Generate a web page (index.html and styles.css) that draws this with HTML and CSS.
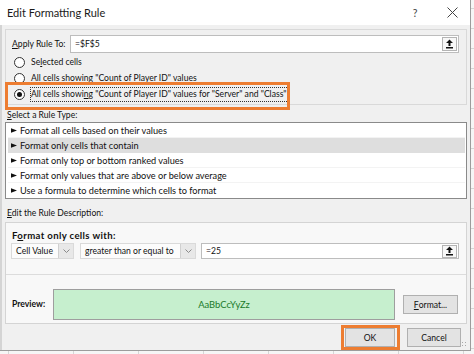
FILE: index.html
```html
<!DOCTYPE html>
<html>
<head>
<meta charset="utf-8">
<link rel="stylesheet" href="styles.css">
</head>
<body>
<div class="dialog">
  <div class="titlebar">
    <span class="title">Edit Formatting Rule</span>
    <span class="help">?</span>
    <span class="close"><svg width="11" height="11" viewBox="0 0 11 11"><path d="M0.5 0.5 L10.5 10.5 M10.5 0.5 L0.5 10.5" stroke="#444" stroke-width="1" fill="none"/></svg></span>
  </div>
  <div class="main">
    <div class="group apply">
      <div class="apply-row">
        <span class="lbl"><u>A</u>pply Rule To:</span>
        <div class="refbox">
          <span class="reftext">=$F$5</span>
          <span class="collapse"><svg width="9" height="10" viewBox="0 0 9 10"><path d="M4.5 0.5 L8 4 L5.5 4 L5.5 7 L3.5 7 L3.5 4 L1 4 Z" fill="#111"/><rect x="1" y="8" width="7" height="1.5" fill="#111"/></svg></span>
        </div>
      </div>
      <div class="radio-row"><span class="radio"></span><span class="rtext">Se<u>l</u>ected cells</span></div>
      <div class="radio-row"><span class="radio"></span><span class="rtext">All cells showing &quot;Count of Player ID&quot; values</span></div>
      <div class="radio-row"><span class="radio checked"></span><span class="rtext focus">All cells showi<u>n</u>g &quot;Count of Player ID&quot; values for &quot;Server&quot; and &quot;Class&quot;</span></div>
    </div>

    <div class="section-label"><u>S</u>elect a Rule Type:</div>
    <div class="listbox">
      <div class="item"><svg class="arrow" width="6" height="5" viewBox="0 0 6 5"><path d="M0 0.3 L6 2.5 L0 4.7 Z" fill="#111"/></svg>Format all cells based on their values</div>
      <div class="item sel"><svg class="arrow" width="6" height="5" viewBox="0 0 6 5"><path d="M0 0.3 L6 2.5 L0 4.7 Z" fill="#111"/></svg>Format only cells that contain</div>
      <div class="item"><svg class="arrow" width="6" height="5" viewBox="0 0 6 5"><path d="M0 0.3 L6 2.5 L0 4.7 Z" fill="#111"/></svg>Format only top or bottom ranked values</div>
      <div class="item"><svg class="arrow" width="6" height="5" viewBox="0 0 6 5"><path d="M0 0.3 L6 2.5 L0 4.7 Z" fill="#111"/></svg>Format only values that are above or below average</div>
      <div class="item last"><svg class="arrow" width="6" height="5" viewBox="0 0 6 5"><path d="M0 0.3 L6 2.5 L0 4.7 Z" fill="#111"/></svg>Use a formula to determine which cells to format</div>
    </div>

    <div class="section-label desc-label"><u>E</u>dit the Rule Description:</div>
    <div class="group desc">
      <div class="desc-top">
        <div class="bold-label fmt-label">F<u>o</u>rmat only cells with:</div>
        <div class="criteria">
          <div class="combo c1"><span class="val">Cell Value</span><span class="drop"><svg width="7" height="4" viewBox="0 0 7 4"><path d="M0.5 0.5 L3.5 3.5 L6.5 0.5" stroke="#8a8a8a" fill="none"/></svg></span></div>
          <div class="combo c2"><span class="val">greater than or equal to</span><span class="drop"><svg width="7" height="4" viewBox="0 0 7 4"><path d="M0.5 0.5 L3.5 3.5 L6.5 0.5" stroke="#8a8a8a" fill="none"/></svg></span></div>
          <div class="refbox crit">
            <span class="reftext">=25</span>
            <span class="collapse"><svg width="9" height="10" viewBox="0 0 9 10"><path d="M4.5 0.5 L8 4 L5.5 4 L5.5 7 L3.5 7 L3.5 4 L1 4 Z" fill="#111"/><rect x="1" y="8" width="7" height="1.5" fill="#111"/></svg></span>
          </div>
        </div>
      </div>
      <div class="desc-bottom">
        <div class="bold-label preview-label">Preview:</div>
        <div class="preview">AaBbCcYyZz</div>
        <div class="btn format"><u>F</u>ormat...</div>
      </div>
    </div>

    <div class="buttons">
      <div class="btn ok">OK</div>
      <div class="btn cancel">Cancel</div>
    </div>
  </div>
  <div class="highlight hl-radio"></div>
  <div class="highlight hl-ok"></div>
  <div class="grip"></div>
</div>
</body>
</html>
```

FILE: styles.css
```css
* { box-sizing: border-box; margin: 0; padding: 0; }
html, body { width: 474px; height: 354px; overflow: hidden; }
body {
  font-family: Lato, "Noto Sans", sans-serif;
  font-size: 8.6px;
  color: #111;
  background-color: #f6f6f6;
  background-image:
    linear-gradient(#d6d6d6 1px, transparent 1px),
    linear-gradient(90deg, #d6d6d6 1px, transparent 1px);
  background-size: 65px 20px;
  background-position: 8px 8px;
}
u { text-decoration: underline; text-underline-offset: 1px; }

.dialog {
  position: relative;
  width: 471px;
  height: 351px;
  background: #f0f0f0;
  border-right: 1px solid #9c9c9c;
  border-bottom: 1px solid #9c9c9c;
  box-shadow: inset 2px 0 0 #d4d4d4;
  display: flex;
  flex-direction: column;
}

.titlebar {
  height: 25px;
  background: #fff;
  display: flex;
  align-items: center;
  padding-left: 7px;
}
.title { flex: 1; font-size: 11px; color: #1a1a1a; }
.help { width: 10px; text-align: center; margin-right: 26px; font-size: 10.5px; color: #444; }
.close { width: 12px; margin-right: 12px; display: flex; justify-content: center; }

.main {
  display: flex;
  flex-direction: column;
  padding: 4px 3px 0 5px;
}

.group { border: 1px solid #d9d9d9; }
.apply {
  height: 76px;
  padding: 5px 7px 2px 0;
}
.apply-row {
  display: flex;
  align-items: center;
  height: 18px;
  padding-left: 6px;
}
.lbl { width: 58px; }
.refbox {
  flex: 1;
  height: 18px;
  display: flex;
  align-items: center;
  background: #fff;
  border: 1px solid #bdbdbd;
  padding-left: 4px;
}
.reftext { flex: 1; }
.collapse {
  width: 15px;
  height: 14px;
  margin-right: 1px;
  border: 1px solid #b4b4b4;
  background: #f7f7f7;
  display: flex;
  align-items: center;
  justify-content: center;
}
.radio-row {
  display: flex;
  align-items: center;
  height: 16px;
  padding-left: 8px;
}
.apply-row + .radio-row { margin-top: 1px; }
.radio {
  width: 11px;
  height: 11px;
  border: 1px solid #333;
  border-radius: 50%;
  background: #fff;
  margin-right: 5px;
  display: flex;
  align-items: center;
  justify-content: center;
}
.radio.checked::after {
  content: "";
  width: 5px;
  height: 5px;
  border-radius: 50%;
  background: #111;
}
.rtext {
  border: 1px solid transparent;
  line-height: 13px;
  padding: 0 1px 0 0;
}
.rtext.focus { border: 1px dotted #333; }

.section-label {
  height: 13px;
  line-height: 13px;
  margin-top: 4px;
  padding-left: 2px;
}
.desc-label { margin-top: 8px; }

.listbox {
  height: 77px;
  border: 1px solid #8a8a8a;
  background: #fff;
  padding: 0 1px 0 2px;
  font-size: 9.2px;
}
.item {
  height: 15px;
  display: flex;
  align-items: center;
  padding-left: 3px;
  border-bottom: 1px solid #f3f3f3;
}
.item.last { border-bottom: none; }
.item.sel { background: #dedede; border-bottom-color: #dedede; }
.arrow { margin-right: 3px; flex: none; }

.desc {
  height: 102px;
  margin-top: 2px;
  background: #f8f8f8;
  border-color: #d4d4d4;
  display: flex;
  flex-direction: column;
}
.desc-top {
  height: 52px;
  padding: 6px 7px 0 5px;
  border-bottom: 1px solid #dcdcdc;
}
.bold-label {
  font-weight: 700;
  height: 13px;
  line-height: 13px;
  padding-left: 1px;
}
.fmt-label { font-size: 9.6px; letter-spacing: 0.35px; }
.criteria {
  display: flex;
  height: 16px;
  margin-top: 1px;
}
.combo {
  display: flex;
  height: 16px;
  border: 1px solid #dadada;
  background: #fcfcfc;
}
.c1 { width: 63px; margin-right: 6px; }
.c2 { width: 116px; margin-right: 5px; }
.val { flex: 1; padding-left: 4px; line-height: 14px; white-space: nowrap; }
.drop {
  width: 15px;
  background: #e8e8e8;
  border-left: 1px solid #d0d0d0;
  display: flex;
  align-items: center;
  justify-content: center;
}
.crit { height: 16px; flex: 1; }
.crit .collapse { height: 13px; }

.desc-bottom {
  height: 48px;
  display: flex;
  align-items: center;
  padding: 11px 8px 0 6px;
}
.preview-label { width: 41px; padding-left: 0; }
.preview {
  width: 342px;
  height: 31px;
  background: #c6efce;
  border: 1px solid #9e9e9e;
  color: #1b7a2a;
  font-size: 9.4px;
  display: flex;
  align-items: center;
  justify-content: center;
}
.btn {
  height: 19px;
  background: #e3e3e3;
  border: 1px solid #b0b0b0;
  display: flex;
  align-items: center;
  justify-content: center;
}
.format { width: 55px; margin-left: 8px; }

.buttons {
  display: flex;
  justify-content: flex-end;
  gap: 12px;
  margin-top: 4px;
  padding-right: 6px;
}
.ok { width: 50px; }
.cancel { width: 54px; }

.highlight {
  position: absolute;
  border: 3px solid #ed7d31;
}
.hl-radio { left: 5px; top: 82px; width: 285px; height: 28px; }
.hl-ok { left: 341px; top: 325px; width: 59px; height: 25px; }
.grip {
  position: absolute;
  right: 2px;
  bottom: 2px;
  width: 7px;
  height: 7px;
  background-image: radial-gradient(circle, #a8a8a8 0.7px, transparent 0.8px);
  background-size: 3px 3px;
}
```
